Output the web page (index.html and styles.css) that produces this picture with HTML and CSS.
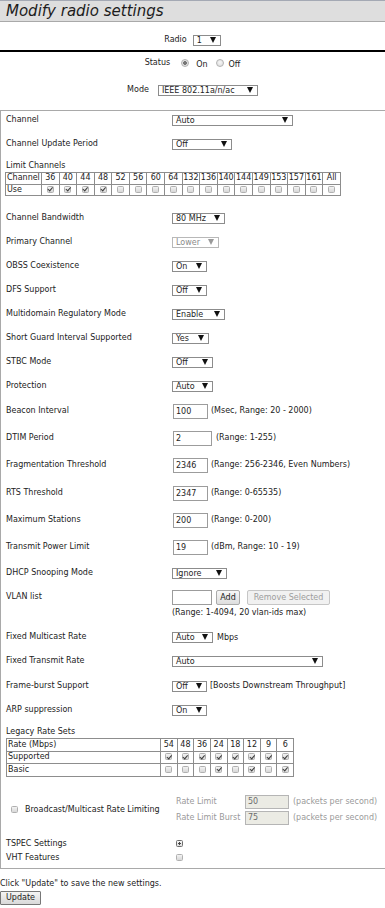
FILE: index.html
```html
<!DOCTYPE html>
<html>
<head>
<meta charset="utf-8">
<title>Modify radio settings</title>
<link rel="stylesheet" href="styles.css">
</head>
<body>
<div class="title">Modify radio settings</div>

<div class="center r-radio"><span>Radio</span><span class="sel w28">1</span></div>
<div class="rule"></div>
<div class="center r-status">
  <span>Status</span>
  <span class="radio on s1"></span><span class="opt">On</span>
  <span class="radio s2"></span><span class="opt o2">Off</span>
</div>
<div class="center r-mode"><span>Mode</span><span class="sel w100">IEEE 802.11a/n/ac</span></div>

<div class="box">
  <div class="row first"><span>Channel</span><span class="sel w120">Auto</span></div>
  <div class="row"><span>Channel Update Period</span><span class="sel w60">Off</span></div>

  <div class="sub">Limit Channels</div>
  <table class="chan">
    <colgroup><col class="c1"><col span="17"></colgroup>
    <tr><td class="l">Channel</td><td>36</td><td>40</td><td>44</td><td>48</td><td>52</td><td>56</td><td>60</td><td>64</td><td>132</td><td>136</td><td>140</td><td>144</td><td>149</td><td>153</td><td>157</td><td>161</td><td>All</td></tr>
    <tr><td class="l">Use</td><td><span class="cb on"></span></td><td><span class="cb on"></span></td><td><span class="cb on"></span></td><td><span class="cb on"></span></td><td><span class="cb"></span></td><td><span class="cb"></span></td><td><span class="cb"></span></td><td><span class="cb"></span></td><td><span class="cb"></span></td><td><span class="cb"></span></td><td><span class="cb"></span></td><td><span class="cb"></span></td><td><span class="cb"></span></td><td><span class="cb"></span></td><td><span class="cb"></span></td><td><span class="cb"></span></td><td><span class="cb"></span></td></tr>
  </table>

  <div class="row bw"><span>Channel Bandwidth</span><span class="sel w53">80 MHz</span></div>
  <div class="row"><span>Primary Channel</span><span class="sel w47 disabled">Lower</span></div>
  <div class="row"><span>OBSS Coexistence</span><span class="sel w35">On</span></div>
  <div class="row"><span>DFS Support</span><span class="sel w35">Off</span></div>
  <div class="row"><span>Multidomain Regulatory Mode</span><span class="sel w53">Enable</span></div>
  <div class="row"><span>Short Guard Interval Supported</span><span class="sel w37">Yes</span></div>
  <div class="row"><span>STBC Mode</span><span class="sel w41">Off</span></div>
  <div class="row"><span>Protection</span><span class="sel w41">Auto</span></div>

  <div class="row in beacon"><span>Beacon Interval</span><div class="val g3"><input class="inp" value="100"><span>(Msec, Range: 20 - 2000)</span></div></div>
  <div class="row in"><span>DTIM Period</span><div class="val"><input class="inp w39" value="2"><span>(Range: 1-255)</span></div></div>
  <div class="row in"><span>Fragmentation Threshold</span><div class="val g3"><input class="inp" value="2346"><span>(Range: 256-2346, Even Numbers)</span></div></div>
  <div class="row in rts"><span>RTS Threshold</span><div class="val g3"><input class="inp" value="2347"><span>(Range: 0-65535)</span></div></div>
  <div class="row in"><span>Maximum Stations</span><div class="val g3"><input class="inp" value="200"><span>(Range: 0-200)</span></div></div>
  <div class="row in"><span>Transmit Power Limit</span><div class="val g3"><input class="inp" value="19"><span>(dBm, Range: 10 - 19)</span></div></div>

  <div class="row dhcp"><span>DHCP Snooping Mode</span><span class="sel w55">Ignore</span></div>
  <div class="row"><span>VLAN list</span><div class="val vlan"><input class="inp w40 flush" value=""><button class="btn add">Add</button><button class="btn rem" disabled>Remove Selected</button></div></div>
  <div class="range">(Range: 1-4094, 20 vlan-ids max)</div>
  <div class="row fmr"><span>Fixed Multicast Rate</span><div class="val"><span class="sel w41">Auto</span><span class="up">Mbps</span></div></div>
  <div class="row"><span>Fixed Transmit Rate</span><span class="sel w151">Auto</span></div>
  <div class="row fb"><span>Frame-burst Support</span><div class="val g3"><span class="sel w35">Off</span><span>[Boosts Downstream Throughput]</span></div></div>
  <div class="row"><span>ARP suppression</span><span class="sel w35">On</span></div>

  <div class="sub legacy-l">Legacy Rate Sets</div>
  <table class="legacy">
    <colgroup><col class="c1"><col span="8" class="cn"></colgroup>
    <tr><td class="l">Rate (Mbps)</td><td>54</td><td>48</td><td>36</td><td>24</td><td>18</td><td>12</td><td>9</td><td>6</td></tr>
    <tr><td class="l">Supported</td><td><span class="cb on"></span></td><td><span class="cb on"></span></td><td><span class="cb on"></span></td><td><span class="cb on"></span></td><td><span class="cb on"></span></td><td><span class="cb on"></span></td><td><span class="cb on"></span></td><td><span class="cb on"></span></td></tr>
    <tr><td class="l">Basic</td><td><span class="cb"></span></td><td><span class="cb"></span></td><td><span class="cb"></span></td><td><span class="cb on"></span></td><td><span class="cb"></span></td><td><span class="cb on"></span></td><td><span class="cb"></span></td><td><span class="cb on"></span></td></tr>
  </table>

  <div class="bm">
    <div class="bm-left"><span class="cb"></span><span>Broadcast/Multicast Rate Limiting</span></div>
    <div class="bm-right">
      <div class="bm-row"><span class="bm-lbl">Rate Limit</span><input class="inp dis w44" value="50" disabled><span class="muted">(packets per second)</span></div>
      <div class="bm-row"><span class="bm-lbl">Rate Limit Burst</span><input class="inp dis w44" value="75" disabled><span class="muted">(packets per second)</span></div>
    </div>
  </div>

  <div class="row small tspec"><span>TSPEC Settings</span><span class="val pad"><span class="plus"></span></span></div>
  <div class="row small"><span>VHT Features</span><span class="val pad"><span class="cb"></span></span></div>
</div>

<div class="note">Click "Update" to save the new settings.</div>
<button class="btn update">Update</button>
</body>
</html>
```

FILE: styles.css
```css
html, body {
  margin: 0;
  padding: 0;
  background: #fff;
}
body {
  font-family: "DejaVu Sans", Verdana, sans-serif;
  font-size: 8px;
  line-height: 10px;
  color: #222;
}

.title {
  height: 20px;
  border-top: 1px solid #a4a9b4;
  border-bottom: 1px solid #a9a9a9;
  background: #dedede;
  font-style: italic;
  font-size: 15px;
  line-height: 20px;
  padding-left: 6px;
  color: #1c1c1c;
}

.center {
  display: flex;
  justify-content: center;
  align-items: center;
  height: 12px;
}
.r-radio { margin-top: 12px; gap: 6px; }
.rule { height: 2px; background: #000; margin-top: 4px; }
.r-status { margin-top: 5px; }
.r-status .s1 { margin-left: 11px; }
.r-status .opt { margin-left: 7px; margin-top: 3px; }
.r-status .s2 { margin-left: 8px; }
.r-status .o2 { margin-left: 5px; }
.r-mode { margin-top: 15px; gap: 9px; }

.radio {
  display: inline-block;
  width: 8px;
  height: 8px;
  box-sizing: border-box;
  border-radius: 50%;
  border: 1px solid #b3b3b3;
  background: radial-gradient(circle at 50% 40%, #f7f7f7, #d9d9d9);
}
.radio.on {
  background: radial-gradient(circle, #777 0 1.6px, #e6e6e6 2.2px, #d4d4d4);
}

/* select look-alike */
.sel {
  display: inline-flex;
  align-items: center;
  justify-content: space-between;
  box-sizing: border-box;
  height: 11px;
  border: 1px solid #8c8c8c;
  background: #fff;
  padding: 0 4px 0 3px;
  font-size: 8px;
  line-height: 9px;
  color: #1e1e1e;
  white-space: nowrap;
}
.sel::after {
  content: "";
  width: 0;
  height: 0;
  border-left: 3.5px solid transparent;
  border-right: 3.5px solid transparent;
  border-top: 6px solid #111;
}
.sel.disabled { color: #8a8a8a; border-color: #b8b8b8; }
.sel.disabled::after { border-top-color: #9a9a9a; }

.w28 { width: 28px; }
.w35 { width: 35px; }
.w37 { width: 37px; }
.w41 { width: 41px; }
.w47 { width: 47px; }
.w53 { width: 53px; }
.w55 { width: 55px; }
.w60 { width: 60px; }
.w100 { width: 100px; }
.w120 { width: 121px; }
.w151 { width: 151px; }

/* main box */
.box {
  margin-top: 14px;
  border-top: 1px solid #a9a9a9;
  border-left: 1px solid #a9a9a9;
  border-bottom: 1px solid #a9a9a9;
  padding: 0 0 3px 5px;
}
.row {
  display: grid;
  grid-template-columns: 166px auto;
  justify-items: start;
  align-items: center;
  height: 16px;
  margin-top: 8px;
  white-space: nowrap;
}
.row.first { margin-top: 1px; }
.row.bw { margin-top: 14px; }
.row.in { height: 18px; margin-top: 9px; }
.row.beacon { margin-top: 8px; }
.row.rts { margin-top: 10px; }
.row.dhcp { margin-top: 9px; }
.row.fmr { margin-top: 11px; }
.row.fb { margin-top: 9px; }
.row.small { height: 14px; margin-top: 0; }
.row.tspec { margin-top: 11px; }

.val {
  display: flex;
  align-items: center;
  gap: 4px;
}
.val.g3 { gap: 3px; }
.val.pad { padding-left: 4px; }
.up { align-self: flex-start; margin-top: 1px; }

.sub { height: 10px; margin-top: 9px; }
.legacy-l { margin-top: 9px; }

.inp {
  box-sizing: border-box;
  width: 35px;
  height: 15px;
  margin: 0 0 0 1px;
  padding: 0 2px;
  border: 1px solid #9c9c9c;
  font-family: "DejaVu Sans", Verdana, sans-serif;
  font-size: 8px;
  color: #1e1e1e;
  background: #fff;
  outline: none;
}
.inp.w39 { width: 39px; }
.inp.w40 { width: 40px; }
.inp.w44 { width: 44px; }
.inp.flush { margin-left: 0; }
.inp.dis {
  height: 14px;
  margin-left: 0;
  background: #ebebe4;
  border-color: #b5b5b5;
  color: #6d6d6d;
}

.btn {
  box-sizing: border-box;
  height: 15px;
  padding: 0 4px;
  border: 1px solid #ababab;
  border-radius: 2px;
  background: linear-gradient(#f7f7f7, #dedede);
  font-family: "DejaVu Sans", Verdana, sans-serif;
  font-size: 8px;
  line-height: 11px;
  color: #222;
}
.btn.add { width: 24px; padding: 0; }
.vlan .rem { margin-left: 3px; width: 83px; padding: 0; color: #9d9d9d; background: #f1f1f1; border-color: #c6c6c6; }

.range { margin: 3px 0 0 166px; height: 10px; }

/* tables */
table {
  border-collapse: collapse;
  font-size: 8px;
  line-height: 10px;
}
td {
  border: 1px solid #8d8d8d;
  padding: 0;
  text-align: center;
  height: 10px;
}
td.l { text-align: left; padding-left: 1px; }
.chan {
  margin-top: 1px;
  margin-left: -1px;
  width: 336px;
  table-layout: fixed;
}
.chan .c1 { width: 36px; }
.chan td { height: 10.5px; }
.legacy {
  margin-top: 1px;
  width: 288px;
  table-layout: fixed;
}
.legacy .c1 { width: 154px; }
.legacy td { height: 11.5px; }

.cb {
  display: inline-block;
  position: relative;
  box-sizing: border-box;
  width: 7px;
  height: 7px;
  border: 1px solid #b0b0b0;
  border-radius: 1.5px;
  background: linear-gradient(#f3f3f3, #d7d7d7);
  vertical-align: middle;
}
.cb.on::after {
  content: "";
  position: absolute;
  left: 1.5px;
  top: -0.5px;
  width: 1.5px;
  height: 3.5px;
  border: solid #3a3a3a;
  border-width: 0 1.3px 1.3px 0;
  transform: rotate(40deg);
}

.plus {
  display: inline-block;
  position: relative;
  box-sizing: border-box;
  width: 7px;
  height: 7px;
  border: 1px solid #6f6f6f;
  border-radius: 1.5px;
  background: linear-gradient(#f5f5f5, #dcdcdc);
}
.plus::before, .plus::after {
  content: "";
  position: absolute;
  background: #444;
}
.plus::before { left: 1px; top: 2px; width: 3px; height: 1px; }
.plus::after { left: 2px; top: 1px; width: 1px; height: 3px; }

/* broadcast/multicast */
.bm {
  display: grid;
  grid-template-columns: 166px auto;
  align-items: center;
  margin-top: 17px;
  white-space: nowrap;
}
.bm-left {
  display: flex;
  align-items: center;
  gap: 7px;
  padding-left: 5px;
}
.bm-right { padding-left: 4px; }
.bm-row {
  display: flex;
  align-items: center;
  height: 16px;
  color: #9a9a9a;
}
.bm-lbl { width: 69px; }
.bm-row .muted { margin-left: 4px; }

.note { margin-top: 10px; height: 10px; }
.btn.update {
  display: block;
  margin-top: 2px;
  width: 41px;
  height: 14px;
  padding: 0;
  border-color: #777;
  border-radius: 1px;
  background: linear-gradient(#f4f4f4, #d9d9d9);
}
```
